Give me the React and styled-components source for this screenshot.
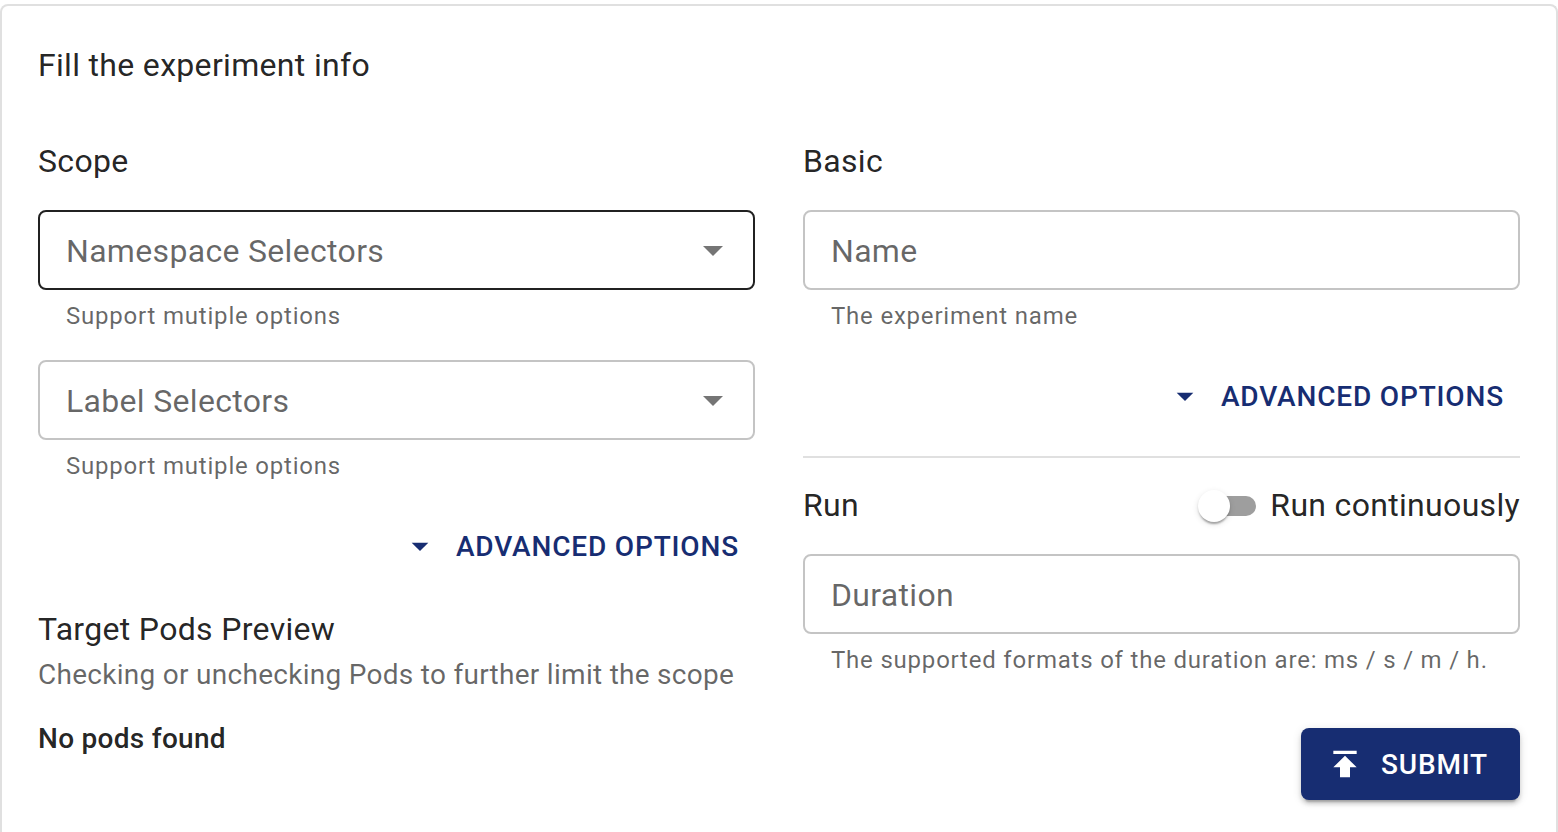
import React from "react";
import styled, { createGlobalStyle, css, ThemeProvider } from "styled-components";

const theme = {
  primary: "#172d72",
  text: "rgba(0, 0, 0, 0.87)",
  secondary: "rgba(0, 0, 0, 0.6)",
  icon: "rgba(0, 0, 0, 0.54)",
  outline: "rgba(0, 0, 0, 0.23)",
  divider: "#e0e0e0",
};

const GlobalStyle = createGlobalStyle`
  *, *::before, *::after { box-sizing: border-box; }
  body {
    margin: 0;
    background: #fff;
    font-family: Roboto, "Liberation Sans", sans-serif;
    -webkit-font-smoothing: antialiased;
  }
  button, input, select { font-family: inherit; margin: 0; }
`;

/* Type scale: Material body 1, body 2, caption and button styles. */
const body1 = css`
  font-size: 32px;
  line-height: 48px;
  font-weight: 400;
  letter-spacing: 0.01em;
`;

const body2 = css`
  font-size: 28px;
  line-height: 40px;
  letter-spacing: 0.01em;
`;

const caption = css`
  font-size: 24px;
  line-height: 40px;
  letter-spacing: 0.033em;
`;

const buttonType = css`
  font-size: 28px;
  line-height: 48px;
  font-weight: 500;
  letter-spacing: 0.03em;
  text-transform: uppercase;
`;

const Page = styled.main`
  min-height: 100vh;
  padding-top: 4px;
  display: flex;
  overflow-x: hidden;
`;

const Card = styled.form`
  flex: 1;
  display: flex;
  flex-direction: column;
  gap: 48px;
  padding: 36px 36px 0;
  border: 2px solid ${(p) => p.theme.divider};
  border-bottom: 0;
  border-radius: 8px 8px 0 0;
  color: ${(p) => p.theme.text};
`;

const Heading = styled.h2`
  ${body1}
  line-height: 46px;
  margin: 0;
  padding-bottom: 2px;
`;

const Columns = styled.div`
  display: grid;
  grid-template-columns: repeat(2, minmax(0, 1fr));
  gap: 48px;
`;

const Column = styled.section`
  display: flex;
  flex-direction: column;
  gap: 24px;
`;

const FieldGroup = styled.div`
  display: flex;
  flex-direction: column;
  gap: 6px;
`;

const Control = styled.div`
  display: grid;
  grid-template-columns: 1fr auto;
  align-items: center;
  height: 80px;
`;

const outlined = css`
  ${body1}
  grid-area: 1 / 1 / 2 / 3;
  width: 100%;
  height: 80px;
  padding: 0 28px;
  border: 2px solid ${(p) => (p.$active ? p.theme.text : p.theme.outline)};
  border-radius: 8px;
  background: transparent;
  color: ${(p) => p.theme.text};
  outline: 0;
`;

const TextInput = styled.input`
  ${outlined}
  &:focus { border-color: ${(p) => p.theme.primary}; }
`;

const SelectInput = styled.select`
  ${outlined}
  appearance: none;
`;

const FieldLabel = styled.label`
  ${body1}
  grid-area: 1 / 1;
  padding: 2px 0 0 28px;
  color: ${(p) => p.theme.secondary};
  pointer-events: none;

  ${TextInput}:not(:placeholder-shown) + & { visibility: hidden; }
`;

const Helper = styled.p`
  ${caption}
  margin: 0;
  padding-left: 28px;
  color: ${(p) => p.theme.secondary};
`;

const Icon = styled.svg`
  width: 40px;
  height: 40px;
  fill: currentColor;
  flex: none;
`;

const SelectArrow = styled(Icon)`
  grid-area: 1 / 2;
  width: 48px;
  height: 48px;
  margin-right: 18px;
  color: ${(p) => p.theme.icon};
  pointer-events: none;
`;

const Button = styled.button`
  ${buttonType}
  display: inline-flex;
  align-items: center;
  align-self: flex-end;
  gap: 16px;
  height: 72px;
  padding: 0 16px;
  border: 0;
  border-radius: 8px;
  background: transparent;
  color: ${(p) => p.theme.primary};
  cursor: pointer;
`;

const ButtonText = styled.span`
  padding-top: 2px;
`;

const SubmitButton = styled(Button)`
  margin-top: 24px;
  padding: 0 32px 0 24px;
  background: ${(p) => p.theme.primary};
  color: #fff;
  box-shadow: 0 6px 2px -4px rgba(0, 0, 0, 0.2), 0 4px 4px 0 rgba(0, 0, 0, 0.14),
    0 2px 10px 0 rgba(0, 0, 0, 0.12);
`;

const Divider = styled.hr`
  width: 100%;
  height: 2px;
  margin: 0;
  border: 0;
  background: ${(p) => p.theme.divider};
`;

const Row = styled.div`
  display: flex;
  align-items: center;
  justify-content: space-between;
`;

const SwitchLabel = styled.label`
  ${body1}
  display: flex;
  align-items: center;
  cursor: pointer;
`;

const SwitchText = styled.span`
  line-height: 46px;
  padding-bottom: 2px;
`;

const Switch = styled.input`
  appearance: none;
  position: relative;
  width: 80px;
  height: 48px;
  padding: 14px;
  cursor: pointer;

  &::before {
    content: "";
    display: block;
    height: 20px;
    border-radius: 14px;
    background: #9e9e9e;
  }
  &::after {
    content: "";
    position: absolute;
    top: 8px;
    left: 8px;
    width: 32px;
    height: 32px;
    border-radius: 50%;
    background: #fff;
    box-shadow: 0 4px 2px -2px rgba(0, 0, 0, 0.2), 0 2px 2px 0 rgba(0, 0, 0, 0.14),
      0 2px 6px 0 rgba(0, 0, 0, 0.12);
  }
  &:checked::after { left: 40px; }
`;

const Preview = styled.div`
  display: flex;
  flex-direction: column;
  gap: 1px;
`;

const Description = styled.p`
  ${body2}
  margin: 0;
  color: ${(p) => p.theme.secondary};
`;

const EmptyNote = styled.p`
  ${body2}
  margin: 0;
  font-weight: 500;
`;

const ArrowPath = () => <path d="M7 10l5 5 5-5z" />;

function SelectField({ id, label, helper, active }) {
  return (
    <FieldGroup>
      <Control>
        <SelectInput id={id} $active={active} defaultValue="" aria-describedby={`${id}-help`}>
          <option value="" aria-label="None" />
        </SelectInput>
        <FieldLabel htmlFor={id}>{label}</FieldLabel>
        <SelectArrow viewBox="0 0 24 24" aria-hidden="true">
          <ArrowPath />
        </SelectArrow>
      </Control>
      <Helper id={`${id}-help`}>{helper}</Helper>
    </FieldGroup>
  );
}

function TextField({ id, label, helper }) {
  return (
    <FieldGroup>
      <Control>
        <TextInput id={id} type="text" placeholder=" " aria-describedby={`${id}-help`} />
        <FieldLabel htmlFor={id}>{label}</FieldLabel>
      </Control>
      <Helper id={`${id}-help`}>{helper}</Helper>
    </FieldGroup>
  );
}

function AdvancedButton() {
  return (
    <Button type="button">
      <Icon viewBox="0 0 24 24" aria-hidden="true">
        <ArrowPath />
      </Icon>
      <ButtonText>Advanced options</ButtonText>
    </Button>
  );
}

export default function App() {
  return (
    <ThemeProvider theme={theme}>
      <GlobalStyle />
      <Page>
        <Card onSubmit={(e) => e.preventDefault()}>
          <Heading as="h1">Fill the experiment info</Heading>
          <Columns>
            <Column>
              <Heading>Scope</Heading>
              <SelectField
                id="namespace"
                label="Namespace Selectors"
                helper="Support mutiple options"
                active
              />
              <SelectField id="labels" label="Label Selectors" helper="Support mutiple options" />
              <AdvancedButton />
              <Preview>
                <Heading>Target Pods Preview</Heading>
                <Description>Checking or unchecking Pods to further limit the scope</Description>
              </Preview>
              <EmptyNote>No pods found</EmptyNote>
            </Column>
            <Column>
              <Heading>Basic</Heading>
              <TextField id="name" label="Name" helper="The experiment name" />
              <AdvancedButton />
              <Divider />
              <Row>
                <Heading>Run</Heading>
                <SwitchLabel>
                  <Switch type="checkbox" role="switch" />
                  <SwitchText>Run continuously</SwitchText>
                </SwitchLabel>
              </Row>
              <TextField
                id="duration"
                label="Duration"
                helper="The supported formats of the duration are: ms / s / m / h."
              />
              <SubmitButton type="submit">
                <Icon viewBox="0 0 24 24" aria-hidden="true">
                  <path d="M5 4v2h14V4H5zm0 10h4v6h6v-6h4l-7-7-7 7z" />
                </Icon>
                <ButtonText>Submit</ButtonText>
              </SubmitButton>
            </Column>
          </Columns>
        </Card>
      </Page>
    </ThemeProvider>
  );
}
